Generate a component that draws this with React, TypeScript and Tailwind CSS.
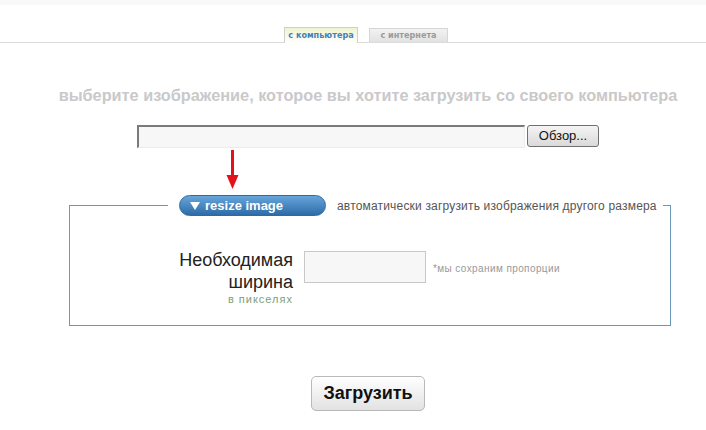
import React from "react";

const sans = { fontFamily: '"Liberation Sans", Arial, sans-serif' };
const tabFont = { fontFamily: '"DejaVu Sans Condensed", "DejaVu Sans", Verdana, sans-serif' };

const Tabs: React.FC = () => (
  <div className="relative h-[43px] border-b border-[#dcdcdc]">
    <div className="absolute bottom-[-1px] left-[284px] flex items-end gap-[11px]">
      <div
        className="flex h-[16px] w-[74px] items-center justify-center whitespace-nowrap border border-b-0 border-[#cfcfcf] bg-gradient-to-b from-[#eef4cf] to-white text-[9px] font-bold text-[#3f80be]"
        style={tabFont}
      >
        с компьютера
      </div>
      <div
        className="mb-[1px] flex h-[14px] w-[79px] items-center justify-center whitespace-nowrap border border-b-0 border-[#d6d6d6] bg-gradient-to-b from-[#f2f2f2] to-[#e2e2e2] text-[9px] font-bold text-[#9a9a9a]"
        style={tabFont}
      >
        с интернета
      </div>
    </div>
  </div>
);

export default function App() {
  return (
    <div className="h-[430px] w-[706px] overflow-hidden bg-white" style={sans}>
      <div className="h-[5px] bg-[#f9f9f9]" />
      <div className="-mt-[5px]">
        <Tabs />
      </div>

      <div className="whitespace-nowrap pl-[30px] pt-[43px] text-center text-[16.3px] font-bold leading-[18px] text-[#c9c9c9]">
        выберите изображение, которое вы хотите загрузить со своего компьютера
      </div>

      <div className="ml-[137px] mt-[21px] flex items-start gap-[2px]">
        <div className="h-[23px] w-[388px] border-l-2 border-t-2 border-r border-b border-l-[#7a7a7a] border-t-[#7a7a7a] border-r-[#ececec] border-b-[#ececec] bg-[#f7f7f7]" />
        <button className="flex h-[22px] w-[72px] items-center justify-center rounded-[3px] border border-[#707070] bg-gradient-to-b from-[#f4f4f4] to-[#dadada] text-[13px] text-[#111]">
          Обзор...
        </button>
      </div>

      <div className="h-[47px] pl-[226px] pt-[2px]">
        <svg width="13" height="40" viewBox="0 0 13 40">
          <rect x="5" y="0" width="3" height="28" fill="#e4111a" />
          <path d="M0.5 25 L12.5 25 L6.5 39 Z" fill="#e4111a" />
        </svg>
      </div>

      <fieldset className="ml-[69px] w-[602px] border border-[#6b97b9] px-0 pb-[20px] pt-[33px]">
        <legend className="ml-[98px] flex items-center pl-[11px] pr-[6px]">
          <div className="flex h-[21px] w-[147px] items-center gap-[5px] rounded-full border border-[#2f6a9f] bg-gradient-to-b from-[#66a6dc] to-[#2d6ca6] pl-[10px] text-[13px] font-bold text-white">
            <svg width="10" height="8" viewBox="0 0 10 8">
              <path d="M0 0 L10 0 L5 8 Z" fill="#ffffff" />
            </svg>
            resize image
          </div>
          <span className="ml-[11px] whitespace-nowrap text-[12px] tracking-[0.18px] text-[#555]">
            автоматически загрузить изображения другого размера
          </span>
        </legend>

        <div className="flex items-start">
          <div className="w-[223px] text-right">
            <div className="text-[18px] leading-[22px] text-[#222]">
              Необходимая
              <br />
              ширина
            </div>
            <div className="text-[11px] leading-[12px] tracking-[1px] text-[#7ba07b]">
              в пикселях
            </div>
          </div>
          <div className="ml-[11px] mt-[2px] h-[32px] w-[122px] border border-[#c8c8c8] bg-[#f7f7f7]" />
          <div className="ml-[7px] mt-[12px] whitespace-nowrap text-[10px] tracking-[0.4px] text-[#999]">
            *мы сохраним пропорции
          </div>
        </div>
      </fieldset>

      <div className="ml-[311px] mt-[50px]">
        <button className="flex h-[35px] w-[114px] items-center justify-center rounded-[5px] border border-[#b9b9b9] bg-gradient-to-b from-white to-[#e2e2e2] text-[18px] font-bold text-[#111]">
          Загрузить
        </button>
      </div>
    </div>
  );
}
